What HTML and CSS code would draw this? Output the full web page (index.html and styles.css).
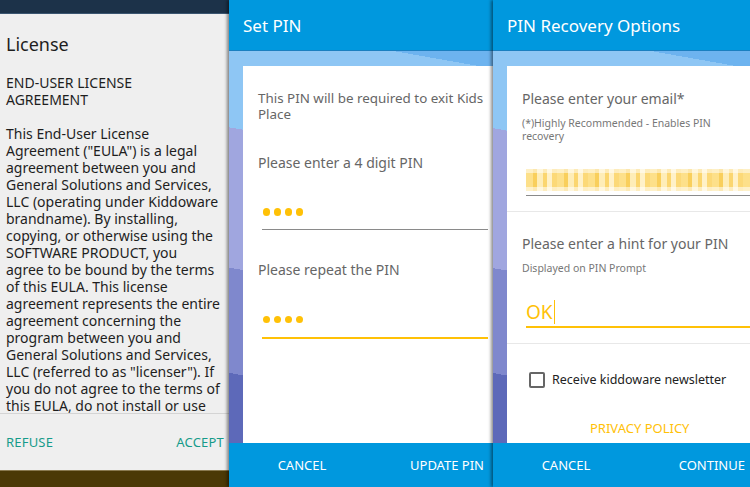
FILE: index.html
```html
<!DOCTYPE html>
<html lang="en">
<head>
  <meta charset="UTF-8" />
  <meta name="viewport" content="width=device-width, initial-scale=1.0" />
  <title>Kids Place setup</title>
  <link rel="stylesheet" href="styles.css">
</head>
<body>
  <div class="screens">

    <section class="license">
      <div class="statusbar"></div>
      <div class="dialog">
        <h2 class="dialog-title">License</h2>
        <div class="dialog-scroll">
          <p>END-USER LICENSE<br>AGREEMENT</p>
          <p>This End-User License<br>
            Agreement ("EULA") is a legal<br>
            agreement between you and<br>
            General Solutions and Services,<br>
            LLC (operating under Kiddoware<br>
            brandname). By installing,<br>
            copying, or otherwise using the<br>
            SOFTWARE PRODUCT, you<br>
            agree to be bound by the terms<br>
            of this EULA. This license<br>
            agreement represents the entire<br>
            agreement concerning the<br>
            program between you and<br>
            General Solutions and Services,<br>
            LLC (referred to as "licenser"). If<br>
            you do not agree to the terms of<br>
            this EULA, do not install or use</p>
        </div>
        <div class="dialog-actions">
          <span>REFUSE</span>
          <span>ACCEPT</span>
        </div>
      </div>
      <div class="taskbar"></div>
    </section>

    <section class="screen screen-pin">
      <header class="appbar">Set PIN</header>
      <div class="wallpaper">
        <div class="card">
          <div class="section">
            <p class="label label-intro">This PIN will be required to exit Kids<br>Place</p>
            <p class="label label-gap">Please enter a 4 digit PIN</p>
            <div class="field field-pin">
              <span class="dot"></span><span class="dot"></span><span class="dot"></span><span class="dot"></span>
            </div>
            <p class="label label-repeat">Please repeat the PIN</p>
            <div class="field field-pin focused">
              <span class="dot"></span><span class="dot"></span><span class="dot"></span><span class="dot"></span>
            </div>
          </div>
        </div>
      </div>
      <footer class="actions">
        <span class="btn-cancel">CANCEL</span>
        <span class="btn-ok">UPDATE PIN</span>
      </footer>
    </section>

    <section class="screen screen-recovery">
      <header class="appbar">PIN Recovery Options</header>
      <div class="wallpaper">
        <div class="card">
          <div class="section section-first">
            <p class="label">Please enter your email*</p>
            <p class="hint">(*)Highly Recommended - Enables PIN<br>recovery</p>
            <div class="field field-email">
              <div class="blurred"></div>
            </div>
          </div>
          <div class="section">
            <p class="label">Please enter a hint for your PIN</p>
            <p class="hint">Displayed on PIN Prompt</p>
            <div class="field field-text focused">
              <span class="typed">OK</span><span class="cursor"></span>
            </div>
          </div>
          <div class="section section-last">
            <label class="checkbox-row">
              <span class="checkbox"></span>
              Receive kiddoware newsletter
            </label>
            <a class="privacy">PRIVACY POLICY</a>
          </div>
        </div>
      </div>
      <footer class="actions actions-recovery">
        <span class="btn-cancel">CANCEL</span>
        <span class="btn-ok">CONTINUE</span>
      </footer>
    </section>

  </div>
</body>
</html>
```

FILE: styles.css
```css
* { margin: 0; padding: 0; box-sizing: border-box; }
html, body {
  width: 750px;
  height: 487px;
  overflow: hidden;
  font-family: "Noto Sans", "Open Sans", sans-serif;
  background: #000;
}
.screens {
  display: flex;
  height: 487px;
}

/* license dialog */
.license {
  width: 229px;
  flex-shrink: 0;
  display: flex;
  flex-direction: column;
  background: #efefef;
}
.statusbar {
  height: 14px;
  background: #1c3249;
  border-bottom: 1px solid #3a5570;
}
.dialog {
  height: 456px;
  display: flex;
  flex-direction: column;
  color: #1e1e1e;
}
.dialog-title {
  font-size: 18px;
  font-weight: normal;
  line-height: 24px;
  padding: 18px 6px 0;
}
.dialog-scroll {
  height: 358px;
  overflow: hidden;
  white-space: nowrap;
  padding: 18px 0 0 6px;
  border-bottom: 1px solid #d4d4d4;
  font-size: 14px;
  line-height: 17px;
}
.dialog-scroll p + p { margin-top: 17px; }
.dialog-actions {
  flex: 1;
  display: flex;
  align-items: center;
  justify-content: space-between;
  padding: 0 5px 0 6px;
  font-size: 13px;
  color: #169b8a;
  letter-spacing: 0.2px;
}
.taskbar {
  flex: 1;
  background: #4b3906;
  border-top: 1px solid #8a7a50;
}

/* setup screens */
.screen {
  display: flex;
  flex-direction: column;
  position: relative;
  box-shadow: -2px 0 3px rgba(0,0,0,0.45);
  overflow: hidden;
}
.screen-pin { width: 264px; flex-shrink: 0; }
.screen-recovery { width: 257px; flex-shrink: 0; }
.appbar {
  height: 51px;
  flex-shrink: 0;
  background: #0098de;
  color: #fff;
  font-size: 17px;
  line-height: 51px;
  padding-left: 14px;
  border-bottom: 1px solid #1a7fc0;
}
.wallpaper {
  flex: 1;
  padding: 15px 0 0 14px;
  display: flex;
  background: linear-gradient(190deg, #6db3ef 0 4%, #8ec6f4 4% 28%, #a0a6df 28% 60%, #7f88cd 60% 84%, #5d69b9 84%);
}
.card {
  flex: 1;
  min-width: 0;
  background: #fff;
}
.section {
  padding: 24px 0 15px 15px;
  white-space: nowrap;
}
.section + .section { border-top: 1px solid #e8e8e8; }
.section-first { padding-top: 25px; }
.label {
  font-size: 14px;
  line-height: 16px;
  color: #666;
}
.label-intro { font-size: 13.4px; }
.label-gap { margin-top: 33px; }
.label-repeat { margin-top: 32px; }
.hint {
  font-size: 10.5px;
  line-height: 13px;
  color: #777;
  margin-top: 10px;
}
.field {
  margin-left: 4px;
  border-bottom: 1px solid #8a8a8a;
  display: flex;
  align-items: center;
}
.field.focused { border-bottom: 2px solid #ffc107; }
.field-pin {
  height: 35px;
  margin-top: 24px;
  margin-right: 5px;
  padding-left: 1px;
  gap: 3.7px;
}
.field-pin.focused { height: 37px; }
.dot {
  width: 7.3px;
  height: 7.3px;
  border-radius: 50%;
  background: #ffc107;
}
.field-email {
  margin-top: 21px;
  padding: 5px 0 4px;
}
.blurred {
  width: 100%;
  height: 22px;
  background:
    linear-gradient(180deg, rgba(255,255,255,0.5) 0 20%, rgba(255,255,255,0) 20% 80%, rgba(255,255,255,0.55) 80%),
    repeating-linear-gradient(90deg, #fde08a 0 7px, #f9cf5c 7px 11px, #feedb8 11px 17px, #fbd670 17px 21px, #fff1c8 21px 26px, #fcd978 26px 31px);
}
.field-text {
  margin-top: 24px;
  height: 29px;
  align-items: flex-end;
  padding-bottom: 1px;
}
.typed {
  font-size: 19px;
  line-height: 26px;
  color: #ffc107;
}
.cursor {
  width: 1px;
  height: 24px;
  margin: 0 0 1px 1px;
  background: #ffc107;
}
.section-last {
  padding-top: 28px;
  padding-bottom: 0;
}
.checkbox-row {
  display: flex;
  align-items: center;
  gap: 7px;
  padding-left: 7px;
  font-size: 12.5px;
  line-height: 16px;
  color: #222;
}
.checkbox {
  width: 16px;
  height: 16px;
  border: 2px solid #666;
  border-radius: 2px;
}
.privacy {
  display: block;
  margin-top: 32px;
  padding-left: 68px;
  font-size: 13px;
  line-height: 16px;
  color: #ffc107;
}
.actions {
  height: 44px;
  flex-shrink: 0;
  display: flex;
  align-items: center;
  justify-content: space-between;
  background: #0098de;
  color: #fff;
  font-size: 13px;
  padding-right: 9px;
}
.actions-recovery { padding-right: 5px; }
.btn-cancel {
  width: 146px;
  text-align: center;
}
```
